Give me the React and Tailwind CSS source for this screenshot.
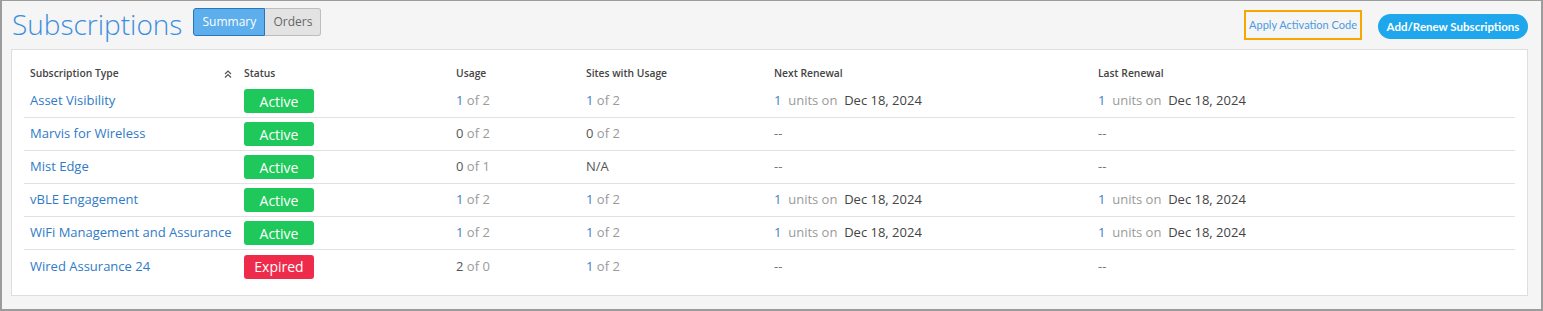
import React from "react";

const ROWS = [
  { name: "Asset Visibility", status: "Active", usage: [1, 2], sites: [1, 2], next: true, last: true },
  { name: "Marvis for Wireless", status: "Active", usage: [0, 2], sites: [0, 2], next: false, last: false },
  { name: "Mist Edge", status: "Active", usage: [0, 1], sites: null, next: false, last: false },
  { name: "vBLE Engagement", status: "Active", usage: [1, 2], sites: [1, 2], next: true, last: true },
  { name: "WiFi Management and Assurance", status: "Active", usage: [1, 2], sites: [1, 2], next: true, last: true },
  { name: "Wired Assurance 24", status: "Expired", usage: [2, 0], sites: [1, 2], next: false, last: false },
];

function Count({ pair }) {
  if (!pair) return <span className="text-[#555]">N/A</span>;
  const [a, b] = pair;
  const blue = a > 0 && b > 0;
  return (
    <span>
      <span className={blue ? "text-[#3f7fc0]" : "text-[#555]"}>{a}</span>
      <span className="text-[#9a9a9a]"> of {b}</span>
    </span>
  );
}

function Renewal({ on }) {
  if (!on) return <span className="text-[#777]">--</span>;
  return (
    <span>
      <span className="text-[#3f7fc0]">1</span>
      <span className="text-[#9a9a9a]">&nbsp; units on&nbsp; </span>
      <span className="text-[#444]">Dec 18, 2024</span>
    </span>
  );
}

function SortIcon() {
  return (
    <svg width="8" height="8" viewBox="0 0 8 8" className="text-[#555]">
      <path d="M1 4 L4 1 L7 4 M1 7.5 L4 4.5 L7 7.5" fill="none" stroke="currentColor" strokeWidth="1.2" />
    </svg>
  );
}

export default function App() {
  return (
    <div
      className="h-[311px] w-[1543px] bg-[#f5f5f5] border-t border-x-2 border-b-2 border-[#9c9c9c] overflow-hidden"
      style={{ fontFamily: "'Open Sans', sans-serif" }}
    >
      {/* Top bar */}
      <div className="flex items-start h-[46px] pl-[10px] pr-[13px]">
        <h1 className="text-[28px] font-light text-[#3a8ee0] leading-none mt-[9px]">
          Subscriptions
        </h1>
        <div className="flex ml-[11px] mt-[7px] h-[28px]">
          <button className="w-[72px] h-full rounded-l-[3px] bg-[#5caeec] border border-[#2c74b8] text-white text-[12px]">
            Summary
          </button>
          <button className="w-[56px] h-full rounded-r-[3px] bg-[#e3e3e3] border border-l-0 border-[#bdbdbd] text-[#666] text-[12px]">
            Orders
          </button>
        </div>
        <div className="flex-1" />
        <div
          className="mt-[9px] h-[30px] w-[118px] border-2 border-[#f6a800] flex items-center justify-center text-[11px] text-[#4a9be4]"
          style={{ fontFamily: "Lato, sans-serif" }}
        >
          Apply Activation Code
        </div>
        <button
          className="ml-[16px] mt-[13px] h-[25px] w-[150px] rounded-full bg-[#1ea7ec] text-white text-[11.5px] font-bold"
          style={{ fontFamily: "Lato, sans-serif" }}
        >
          Add/Renew Subscriptions
        </button>
      </div>

      {/* Card */}
      <div className="ml-[9px] mr-[13px] mt-[2px] h-[247px] bg-white border border-[#dedede] px-[12px] pt-[12px]">
        <div className="flex items-center h-[23px] text-[10.3px] font-semibold text-[#444]">
          <div className="w-[214px] pl-[6px] flex items-center justify-between pr-[6px]">
            <span>Subscription Type</span>
            <SortIcon />
          </div>
          <div className="w-[212px] pl-[6px]">Status</div>
          <div className="w-[130px] pl-[6px]">Usage</div>
          <div className="w-[188px] pl-[6px]">Sites with Usage</div>
          <div className="w-[324px] pl-[6px]">Next Renewal</div>
          <div className="flex-1 pl-[6px]">Last Renewal</div>
        </div>
        {ROWS.map((r, i) => (
          <div
            key={r.name}
            className={`flex items-center h-[33px] text-[13px] ${i < ROWS.length - 1 ? "border-b border-[#e2e2e2]" : ""}`}
          >
            <div className="w-[214px] pl-[6px] text-[#2f7bc7] whitespace-nowrap">{r.name}</div>
            <div className="w-[212px] pl-[6px]">
              <div
                className={`w-[70px] h-[24px] rounded-[3px] flex items-center justify-center text-white text-[14px] ${
                  r.status === "Active" ? "bg-[#1fc85a]" : "bg-[#ef2b4b]"
                }`}
              >
                {r.status}
              </div>
            </div>
            <div className="w-[130px] pl-[6px]">
              <Count pair={r.usage} />
            </div>
            <div className="w-[188px] pl-[6px]">
              <Count pair={r.sites} />
            </div>
            <div className="w-[324px] pl-[6px]">
              <Renewal on={r.next} />
            </div>
            <div className="flex-1 pl-[6px]">
              <Renewal on={r.last} />
            </div>
          </div>
        ))}
      </div>
    </div>
  );
}
